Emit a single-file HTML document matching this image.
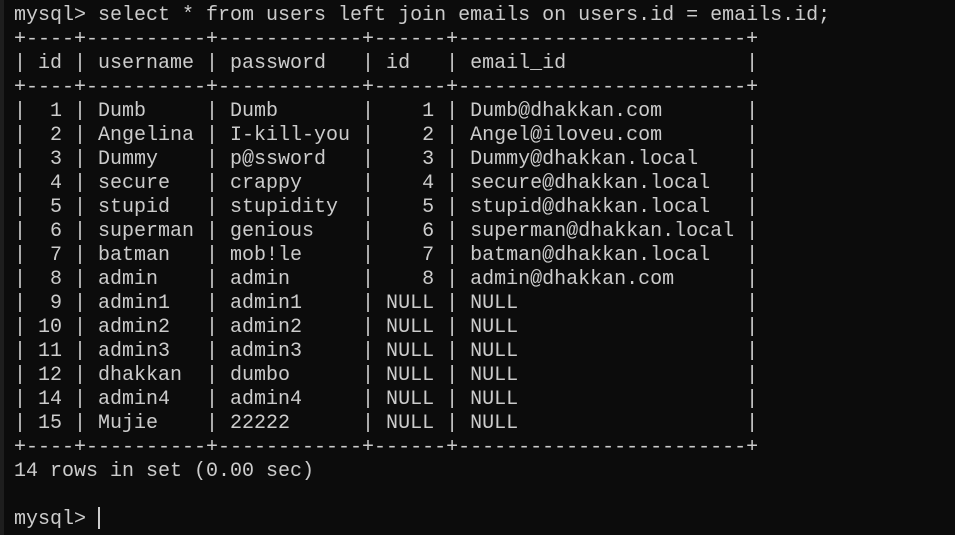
<!DOCTYPE html>
<html><head><style>
html,body{margin:0;padding:0;background:#0c0c0c;width:955px;height:535px;overflow:hidden}
.strip{position:absolute;left:0;top:0;width:4px;height:535px;background:#1e1e1e}
pre{position:absolute;left:14px;top:4px;margin:0;font-family:"Liberation Mono",monospace;font-size:20px;line-height:24px;color:#cccccc;white-space:pre}
.cur{position:absolute;left:98px;top:507px;width:2px;height:22px;background:#cccccc}
</style></head><body>
<div class="strip"></div>
<pre>mysql&gt; select * from users left join emails on users.id = emails.id;
+----+----------+------------+------+------------------------+
| id | username | password   | id   | email_id               |
+----+----------+------------+------+------------------------+
|  1 | Dumb     | Dumb       |    1 | Dumb@dhakkan.com       |
|  2 | Angelina | I-kill-you |    2 | Angel@iloveu.com       |
|  3 | Dummy    | p@ssword   |    3 | Dummy@dhakkan.local    |
|  4 | secure   | crappy     |    4 | secure@dhakkan.local   |
|  5 | stupid   | stupidity  |    5 | stupid@dhakkan.local   |
|  6 | superman | genious    |    6 | superman@dhakkan.local |
|  7 | batman   | mob!le     |    7 | batman@dhakkan.local   |
|  8 | admin    | admin      |    8 | admin@dhakkan.com      |
|  9 | admin1   | admin1     | NULL | NULL                   |
| 10 | admin2   | admin2     | NULL | NULL                   |
| 11 | admin3   | admin3     | NULL | NULL                   |
| 12 | dhakkan  | dumbo      | NULL | NULL                   |
| 14 | admin4   | admin4     | NULL | NULL                   |
| 15 | Mujie    | 22222      | NULL | NULL                   |
+----+----------+------------+------+------------------------+
14 rows in set (0.00 sec)

mysql&gt; </pre>
<div class="cur"></div>
</body></html>
